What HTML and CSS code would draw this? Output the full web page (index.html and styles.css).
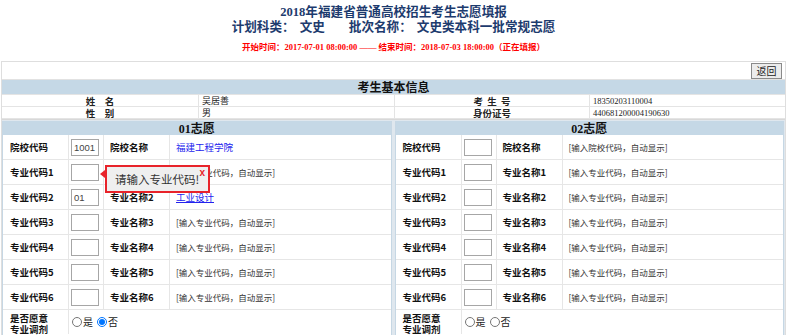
FILE: index.html
```html
<!DOCTYPE html>
<html lang="zh-CN">
<head>
    <meta charset="UTF-8">
    <title>志愿填报</title>
    <link rel="stylesheet" href="styles.css">
</head>
<body>
    <header class="title">
        <div>2018年福建省普通高校招生考生志愿填报</div>
        <div>计划科类：<span class="tv">文史</span><span class="tg"></span>批次名称：<span class="tv">文史类本科一批常规志愿</span></div>
    </header>
    <p class="period">开始时间：2017-07-01 08:00:00 —— 结束时间：2018-07-03 18:00:00（正在填报）</p>

    <div class="frame">
        <div class="toolbar">
            <button type="button">返回</button>
        </div>

        <div class="bar">考生基本信息</div>
        <div class="info">
            <div class="lbl">姓　名</div>
            <div class="val">吴居善</div>
            <div class="lbl">考&nbsp;&nbsp;生&nbsp;&nbsp;号</div>
            <div class="val num">18350203110004</div>
            <div class="lbl">性　别</div>
            <div class="val">男</div>
            <div class="lbl">身份证号</div>
            <div class="val num">440681200004190630</div>
        </div>

        <div class="choices">
            <!-- 01志愿 -->
            <div class="panel">
                <div class="bar">01志愿</div>
                <div class="wish">
                    <div class="k">院校代码</div>
                    <div class="in"><input class="code" type="text" value="1001"></div>
                    <div class="k">院校名称</div>
                    <div class="link">福建工程学院</div>

                    <div class="k">专业代码1</div>
                    <div class="in">
                        <input class="code" type="text">
                        <span class="tip">请输入专业代码!<b>x</b></span>
                    </div>
                    <div class="k">专业名称1</div>
                    <div class="hint">[输入专业代码，自动显示]</div>

                    <div class="k">专业代码2</div>
                    <div class="in"><input class="code" type="text" value="01"></div>
                    <div class="k">专业名称2</div>
                    <div class="link"><u>工业设计</u></div>

                    <div class="k">专业代码3</div>
                    <div class="in"><input class="code" type="text"></div>
                    <div class="k">专业名称3</div>
                    <div class="hint">[输入专业代码，自动显示]</div>

                    <div class="k">专业代码4</div>
                    <div class="in"><input class="code" type="text"></div>
                    <div class="k">专业名称4</div>
                    <div class="hint">[输入专业代码，自动显示]</div>

                    <div class="k">专业代码5</div>
                    <div class="in"><input class="code" type="text"></div>
                    <div class="k">专业名称5</div>
                    <div class="hint">[输入专业代码，自动显示]</div>

                    <div class="k">专业代码6</div>
                    <div class="in"><input class="code" type="text"></div>
                    <div class="k">专业名称6</div>
                    <div class="hint">[输入专业代码，自动显示]</div>

                    <div class="k two last">是否愿意<br>专业调剂</div>
                    <div class="radios last">
                        <label><input type="radio" name="tj1">是</label>
                        <label><input type="radio" name="tj1" checked>否</label>
                    </div>
                </div>
            </div>

            <!-- 02志愿 -->
            <div class="panel">
                <div class="bar">02志愿</div>
                <div class="wish">
                    <div class="k">院校代码</div>
                    <div class="in"><input class="code" type="text"></div>
                    <div class="k">院校名称</div>
                    <div class="hint">[输入院校代码，自动显示]</div>

                    <div class="k">专业代码1</div>
                    <div class="in"><input class="code" type="text"></div>
                    <div class="k">专业名称1</div>
                    <div class="hint">[输入专业代码，自动显示]</div>

                    <div class="k">专业代码2</div>
                    <div class="in"><input class="code" type="text"></div>
                    <div class="k">专业名称2</div>
                    <div class="hint">[输入专业代码，自动显示]</div>

                    <div class="k">专业代码3</div>
                    <div class="in"><input class="code" type="text"></div>
                    <div class="k">专业名称3</div>
                    <div class="hint">[输入专业代码，自动显示]</div>

                    <div class="k">专业代码4</div>
                    <div class="in"><input class="code" type="text"></div>
                    <div class="k">专业名称4</div>
                    <div class="hint">[输入专业代码，自动显示]</div>

                    <div class="k">专业代码5</div>
                    <div class="in"><input class="code" type="text"></div>
                    <div class="k">专业名称5</div>
                    <div class="hint">[输入专业代码，自动显示]</div>

                    <div class="k">专业代码6</div>
                    <div class="in"><input class="code" type="text"></div>
                    <div class="k">专业名称6</div>
                    <div class="hint">[输入专业代码，自动显示]</div>

                    <div class="k two last">是否愿意<br>专业调剂</div>
                    <div class="radios last">
                        <label><input type="radio" name="tj2">是</label>
                        <label><input type="radio" name="tj2">否</label>
                    </div>
                </div>
            </div>
        </div>
    </div>
</body>
</html>
```

FILE: styles.css
```css
body {
    margin: 0;
    background-color: #ffffff;
    font-family: "Liberation Serif", "Noto Sans CJK SC", serif;
    color: #222;
}
.title {
    padding-top: 5px;
    text-align: center;
    font-size: 12.6px;
    line-height: 15px;
    font-weight: bold;
    color: #1d3b6e;
}
.tv {
    margin-left: 5px;
}
.tg {
    display: inline-block;
    width: 24px;
}
.period {
    margin: 6px 0 8px;
    text-align: center;
    font-size: 8.5px;
    line-height: 12px;
    font-weight: bold;
    color: #ff0000;
}
.frame {
    margin: 0 1px;
    border: 1px solid #dedede;
    border-bottom: none;
}
.toolbar {
    display: flex;
    justify-content: flex-end;
    height: 17px;
    padding-right: 3px;
    border-bottom: 1px solid #e2e2e2;
}
.toolbar button {
    width: 31px;
    height: 16px;
    margin-top: 1px;
    padding: 0;
    font-family: "Noto Sans CJK SC", sans-serif;
    font-size: 10px;
    line-height: 14px;
    color: #222;
    background-color: #ececec;
    border: 1px solid #8a8a8a;
    border-radius: 0;
}
.bar {
    display: flex;
    justify-content: center;
    align-items: center;
    height: 14px;
    overflow: hidden;
    background-color: #c5d8e6;
    font-size: 12px;
    font-weight: bold;
    color: #111;
}
/* 考生基本信息 */
.info {
    display: grid;
    grid-template-columns: 197px 196px 195px 1fr;
    grid-auto-rows: 12px;
    border-top: 1px solid #e4e4e4;
}
.info > div {
    box-sizing: border-box;
    display: flex;
    align-items: center;
    padding: 0 3px;
    border-right: 1px solid #e4e4e4;
    border-bottom: 1px solid #e4e4e4;
    font-family: "Noto Sans CJK SC", sans-serif;
    font-size: 9px;
    line-height: 10px;
    white-space: nowrap;
    overflow: hidden;
}
.info > div:nth-child(4n) {
    border-right: none;
}
.info .lbl {
    justify-content: center;
    font-weight: bold;
    font-size: 9.5px;
}
.info .num {
    font-family: "Liberation Serif", serif;
    font-size: 8.5px;
}
/* 志愿 */
.choices {
    display: flex;
    gap: 3px;
    padding: 1px 1px 0 0;
    background-color: #dfe7ee;
    border-top: 1px solid #d8d8d8;
}
.panel {
    flex: 1;
    background-color: #ffffff;
    border: 1px solid #c6d7e4;
    border-top: none;
}
.wish {
    display: grid;
    grid-template-columns: 66px 35px 66px 1fr;
    grid-auto-rows: 25px;
}
.wish > div {
    box-sizing: border-box;
    display: flex;
    align-items: center;
    padding-left: 6px;
    border-right: 1px solid #e6e6e6;
    border-bottom: 1px solid #e6e6e6;
    font-family: "Noto Sans CJK SC", sans-serif;
    font-size: 9.5px;
    line-height: 12px;
    white-space: nowrap;
}
.wish > div:nth-child(4n) {
    border-right: none;
}
.wish > div:nth-child(4n+1) {
    padding-left: 7px;
}
.wish > .in {
    position: relative;
    padding-left: 2px;
}
.wish > .last {
    height: 24px;
    border-bottom: none;
}
.wish .k {
    font-weight: bold;
    color: #111;
}
.wish .two {
    align-items: flex-start;
    padding-top: 3px;
    line-height: 10.5px;
}
.wish .hint {
    font-size: 8.5px;
    color: #333;
}
.wish .link {
    color: #2323ee;
}
.code {
    box-sizing: border-box;
    width: 28px;
    height: 17px;
    padding: 0 2px;
    border: 1px solid #a6a6a6;
    font-family: "Liberation Sans", sans-serif;
    font-size: 9.5px;
    color: #444;
}
.wish > .radios {
    grid-column: span 3;
    padding-left: 3px;
    font-size: 10px;
    border-right: none;
}
.radios label {
    display: flex;
    align-items: center;
    margin-right: 4px;
}
.radios input {
    width: 10px;
    height: 10px;
    margin: 0 1px 0 0;
}
/* 校验提示 */
.tip {
    position: absolute;
    left: 36px;
    top: 5px;
    box-sizing: border-box;
    width: 105px;
    height: 28px;
    padding-left: 8px;
    background-color: #efefef;
    border: 2px solid #e8232a;
    font-size: 11.5px;
    font-weight: normal;
    line-height: 24px;
    color: #333;
    white-space: nowrap;
    z-index: 10;
}
.tip::before {
    content: "";
    position: absolute;
    left: -7px;
    top: 3px;
    border-top: 4px solid transparent;
    border-bottom: 4px solid transparent;
    border-right: 5px solid #e8232a;
}
.tip b {
    position: absolute;
    right: 3px;
    top: 1px;
    font-family: "Liberation Sans", sans-serif;
    font-size: 10px;
    line-height: 10px;
    color: #e8232a;
}
```
